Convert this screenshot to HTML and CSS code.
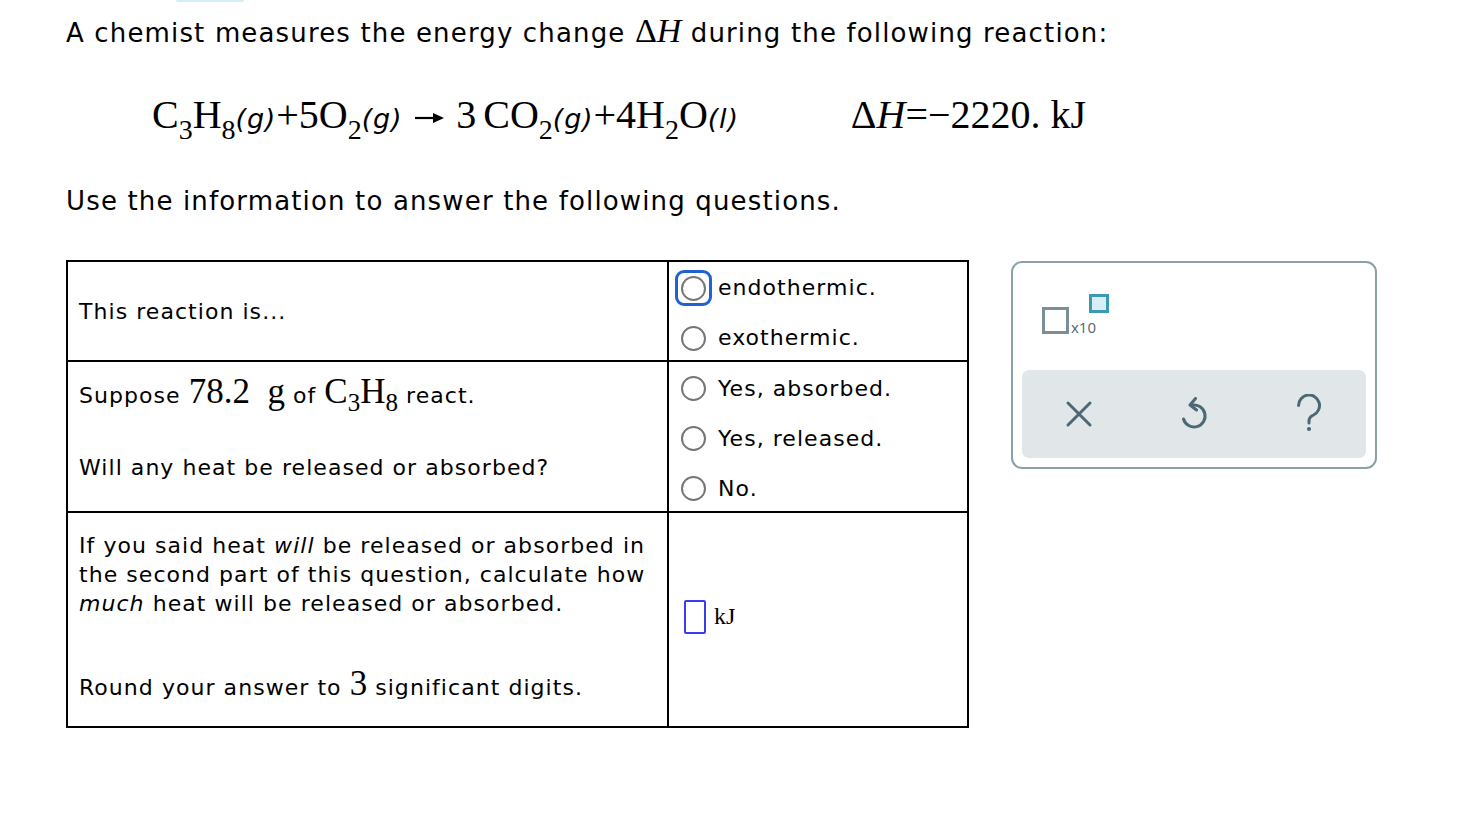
FILE: index.html
```html
<!DOCTYPE html>
<html>
<head>
<meta charset="utf-8">
<link rel="stylesheet" href="styles.css">
</head>
<body>
<div class="tab-hint"></div>
<div class="page">
  <div class="main">
    <p class="intro">A chemist measures the energy change <span class="serif">Δ</span><span class="serif it">H</span> during the following reaction:</p>
    <div class="equation">
      <div class="rxn">C<sub>3</sub>H<sub>8</sub><span class="state">(g)</span>+5O<sub>2</sub><span class="state">(g)</span><svg class="arrow" width="30" height="12" viewBox="0 0 30 12"><path d="M0 6 H20" stroke="#000" stroke-width="2.2" fill="none"/><path d="M18 1 L29 6 L18 11 Z" fill="#000"/></svg>3<span class="thin"></span>CO<sub>2</sub><span class="state">(g)</span>+4H<sub>2</sub>O<span class="state">(l)</span></div>
      <div class="dh">Δ<span class="it">H</span>=−2220.&nbsp;kJ</div>
    </div>
    <p class="intro second">Use the information to answer the following questions.</p>

    <div class="qtable">
      <div class="cell left c1">This reaction is...</div>
      <div class="cell right c1">
        <div class="opts">
          <div class="opt"><span class="focus"><span class="radio"></span></span>endothermic.</div>
          <div class="opt"><span class="radio"></span>exothermic.</div>
        </div>
      </div>

      <div class="cell left c2">
        <div class="suppose">Suppose <span class="serif big">78.2&nbsp;&nbsp;g</span> of <span class="serif big">C<sub>3</sub>H<sub>8</sub></span> react.</div>
        <div class="will">Will any heat be released or absorbed?</div>
      </div>
      <div class="cell right c2">
        <div class="opts">
          <div class="opt"><span class="radio"></span>Yes, absorbed.</div>
          <div class="opt"><span class="radio"></span>Yes, released.</div>
          <div class="opt"><span class="radio"></span>No.</div>
        </div>
      </div>

      <div class="cell left c3">
        <div class="para">If you said heat <em>will</em> be released or absorbed in the second part of this question, calculate how <em>much</em> heat will be released or absorbed.</div>
        <div class="round">Round your answer to <span class="serif big">3</span> significant digits.</div>
      </div>
      <div class="cell right c3">
        <div class="answer"><span class="inbox"></span><span class="serif unit">kJ</span></div>
      </div>
    </div>
  </div>

  <div class="panel">
    <div class="sci">
      <span class="sbox"></span><span class="x10">x10</span><span class="supbox"></span>
    </div>
    <div class="bar">
      <svg class="ico" width="30" height="34" viewBox="0 0 30 34"><path d="M4 6 L26 28 M26 6 L4 28" stroke="#4d6875" stroke-width="3" stroke-linecap="round" fill="none"/></svg>
      <svg class="ico" width="30" height="34" viewBox="0 0 30 34"><path d="M4.5 22 A11 11 0 1 0 12.5 8.3" stroke="#4d6875" stroke-width="3" stroke-linecap="round" fill="none"/><path d="M16.5 1.5 L11 8 L17.5 13" stroke="#4d6875" stroke-width="3" stroke-linecap="round" stroke-linejoin="round" fill="none"/></svg>
      <svg class="ico" width="30" height="40" viewBox="0 0 30 40"><path d="M4.5 11.5 A10.5 10.5 0 1 1 19.5 21 Q15 23 15 27 L15 29" stroke="#4d6875" stroke-width="3" stroke-linecap="round" fill="none"/><circle cx="15" cy="35" r="2.1" fill="#4d6875"/></svg>
    </div>
  </div>
</div>
</body>
</html>
```

FILE: styles.css
```css
html, body {
  margin: 0;
  padding: 0;
  background: #ffffff;
}
body {
  font-family: "DejaVu Sans", Verdana, sans-serif;
  color: #000;
}
.tab-hint {
  margin-left: 176px;
  width: 68px;
  height: 2px;
  background: #d3eef6;
  border-radius: 0 0 6px 6px;
}
.page {
  display: flex;
  align-items: flex-start;
  padding-left: 66px;
}
.main {
  width: 903px;
}
.intro {
  margin: 0;
  font-size: 26px;
  line-height: 32px;
  padding-top: 13px;
  white-space: nowrap;
  letter-spacing: 1.15px;
}
.serif {
  font-family: "Liberation Serif", "Times New Roman", serif;
  letter-spacing: 0;
}
.it {
  font-style: italic;
}
.intro .serif {
  font-size: 34px;
}
.equation {
  display: flex;
  align-items: baseline;
  margin-top: 42px;
  margin-left: 86px;
  font-family: "Liberation Serif", "Times New Roman", serif;
  letter-spacing: 0;
  font-size: 40px;
  line-height: 48px;
  height: 48px;
  white-space: nowrap;
}
.equation sub {
  font-size: 28px;
  vertical-align: -11px;
  line-height: 0;
}
.state {
  font-family: "DejaVu Sans", Verdana, sans-serif;
  font-style: italic;
  font-size: 27px;
  letter-spacing: 0.8px;
}
.arrow {
  margin: 0 11px 0 13px;
  vertical-align: 4px;
}
.thin {
  display: inline-block;
  width: 7px;
}
.dh {
  margin-left: 112px;
}
.second {
  padding-top: 46px;
}
.qtable {
  margin-top: 43px;
  display: grid;
  grid-template-columns: 599px 298px;
  grid-template-rows: 98px 149px 213px;
  border: 2px solid #000;
  width: max-content;
  font-size: 22px;
  letter-spacing: 1.05px;
  row-gap: 2px;
  column-gap: 2px;
  background: #000;
}
.qtable .serif {
  letter-spacing: 0;
}
.cell {
  background: #fff;
}
.left {
  padding-left: 11px;
}
.left.c1 {
  display: flex;
  align-items: center;
}
.right {
  display: flex;
  align-items: center;
  padding-left: 12px;
  box-sizing: border-box;
}
.right.c1, .right.c2 {
  padding-top: 4px;
}
.opts {
  display: flex;
  flex-direction: column;
  gap: 22px;
}
.opt {
  display: flex;
  align-items: center;
  height: 28px;
  line-height: 28px;
}
.radio {
  box-sizing: border-box;
  width: 25px;
  height: 25px;
  border: 2px solid #767676;
  border-radius: 50%;
  margin-right: 12px;
  flex: none;
  background: #fff;
}
.focus {
  display: flex;
  align-items: center;
  justify-content: center;
  box-sizing: border-box;
  width: 37px;
  height: 36px;
  margin-left: -6px;
  margin-right: 6px;
  border: 3.5px solid #1f62d4;
  border-radius: 9px;
  flex: none;
}
.focus .radio {
  margin-right: 0;
}
.c2.left {
  padding-top: 12px;
  box-sizing: border-box;
}
.suppose {
  line-height: 36px;
  height: 36px;
  white-space: nowrap;
}
.big {
  font-size: 35px;
}
.suppose sub {
  font-size: 25px;
  vertical-align: -8px;
  line-height: 0;
}
.will {
  margin-top: 43px;
  line-height: 30px;
}
.c3.left {
  padding-top: 18px;
  box-sizing: border-box;
}
.para {
  line-height: 29px;
  padding-right: 4px;
}
.round {
  margin-top: 48px;
  line-height: 36px;
  height: 36px;
}
.answer {
  display: flex;
  align-items: center;
  padding-left: 3px;
  margin-top: -6px;
}
.inbox {
  box-sizing: border-box;
  width: 22px;
  height: 34px;
  border: 2.5px solid #3b3bf0;
  border-radius: 2px;
}
.unit {
  font-size: 24px;
  margin-left: 8px;
}
.panel {
  box-sizing: border-box;
  margin-left: 42px;
  margin-top: 259px;
  width: 366px;
  height: 208px;
  border: 2px solid #8ca0a8;
  border-radius: 11px;
  padding: 0 9px 9px 9px;
  display: flex;
  flex-direction: column;
  justify-content: space-between;
}
.sci {
  display: flex;
  align-items: flex-end;
  margin-top: 43px;
  margin-left: 20px;
  height: 28px;
}
.sbox {
  box-sizing: border-box;
  width: 27px;
  height: 27px;
  border: 3px solid #7c8e98;
}
.x10 {
  font-family: "Open Sans", "DejaVu Sans", sans-serif;
  font-size: 15px;
  letter-spacing: 0;
  color: #4f6673;
  line-height: 14px;
  margin-left: 2px;
}
.supbox {
  box-sizing: border-box;
  width: 20px;
  height: 19px;
  border: 3px solid #3b99b3;
  background: #d7eef4;
  align-self: flex-start;
  margin-top: -12px;
  margin-left: -7px;
}
.bar {
  height: 88px;
  background: #e1e6e9;
  border-radius: 7px;
  display: flex;
  align-items: center;
  justify-content: center;
  gap: 85px;
}
.ico {
  display: block;
}
```
